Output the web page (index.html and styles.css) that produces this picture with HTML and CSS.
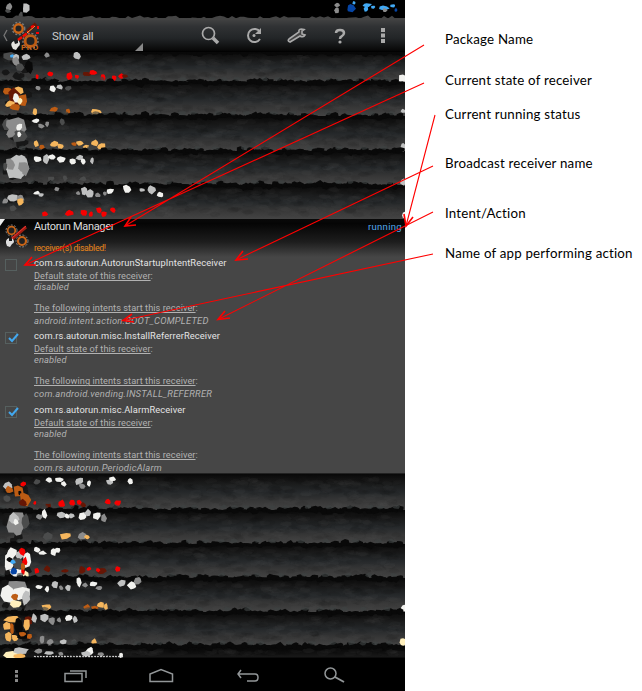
FILE: index.html
```html
<!DOCTYPE html>
<html lang="en">
<head>
<meta charset="utf-8">
<title>Autorun Manager guide</title>
<link rel="stylesheet" href="styles.css">
</head>
<body>
<main class="guide">
  <section class="phone">
    <header class="statusbar"><svg class="art" data-top="0" data-height="18"></svg></header>
    <nav class="actionbar">
      <svg class="bar-art" width="405" height="36" viewBox="0 17 405 36">
        <path class="bar-edge" d=""/>
        <path d="M7 30L4 35.500L7 41" fill="none" stroke="#777" stroke-width="1.300"/>
        <g fill="none" stroke="#777" stroke-width="1.500" stroke-dasharray="2 1.600"><circle cx="18.500" cy="28.500" r="6.200"/><circle cx="30.500" cy="41" r="7.500"/></g>
        <circle cx="18.500" cy="28.500" r="4.200" fill="#222" stroke="#c96518" stroke-width="2.400"/>
        <circle cx="30.500" cy="41" r="5.400" fill="#222" stroke="#bd5c14" stroke-width="2.800"/>
        <path d="M18 40L26 34L35 24" stroke="#f10b00" stroke-width="2.500" stroke-dasharray="5 1" fill="none"/>
        <path d="M28 31L36 24" stroke="#641708" stroke-width="4"/><path d="M27 33L35 26" stroke="#ffb04b"/>
        <path d="M38 26v3M36 33h3M31 27l3 -1" stroke="#f00" stroke-width="2"/>
        <path d="M13 49Q9 43 14 41L15 44L18 43L18 40Q22 44 18 47L16 50" fill="#e4e4df"/>
        <path d="M143 43V51H135Z" fill="#888"/>
        <g fill="none" stroke="#aaa"><circle cx="208.500" cy="33.500" r="6" stroke-width="1.700"/><path d="M213 38L218 43" stroke-width="3.500"/>
        <path d="M260 32A6.500 6.500 0 1 0 260 39" stroke-width="2"/></g>
        <path d="M261 28V34H255Z" fill="#aaa"/><circle cx="254" cy="35.500" r="1.500" fill="#aaa"/>
        <path d="M289 39L299 32Q298 28 304 29.500L302 31V34L305 35Q303 38 300 36L290 42Q287 41 289 39Z" fill="#444" stroke="#aaa" stroke-width="1.600"/>
        <path d="M336 33Q336 30 340 30T344 33Q344 35 341.500 36.500Q340 37 340 39" fill="none" stroke="#aaa" stroke-width="2.500"/><circle cx="340" cy="42" r="1.600" fill="#aaa"/>
        <path d="M381 28h4v4h-4zM381 33.500h4v4h-4zM381 39h4v4h-4z" fill="#aaa"/>
      </svg>
      <span class="filter">Show all</span><span class="pro">PRO</span>
    </nav>
    <div class="row"><svg class="art" data-top="52" data-height="30"></svg></div>
    <div class="row"><svg class="art" data-top="82" data-height="34"></svg></div>
    <div class="row"><svg class="art" data-top="116" data-height="35"></svg></div>
    <div class="row"><svg class="art" data-top="151" data-height="34"></svg></div>
    <div class="row"><svg class="art" data-top="185" data-height="34"></svg></div>
    <article class="expanded">
      <header class="app">
        <svg class="app-icon" width="30" height="32" viewBox="0 218 30 32">
          <path d="M0 219L5 219L0 226Z" fill="#eee"/>
          <g fill="none" stroke="#8b8b8b" stroke-dasharray="2 1.500"><circle cx="11.500" cy="230.500" r="5.500"/><circle cx="22" cy="241" r="6"/></g>
          <circle cx="11.500" cy="230.500" r="3.800" fill="#222" stroke="#c96518" stroke-width="1.800"/><circle cx="22" cy="241" r="4" fill="#222" stroke="#c96518" stroke-width="2.200"/>
          <path d="M12 239L26 227" stroke="#9d1e12" stroke-width="3"/><path d="M12 238L26 226" stroke="#e33"/>
          <path d="M7 246Q4 240 9 238L9 241L12 241L12 238Q16 242 12 244L10 247" fill="#ddd"/>
        </svg>
        <div class="app-name">Autorun Manager</div><div class="running">running</div>
        <div class="warning">receiver(s) disabled!</div>
      </header>
      <div class="entry">
        <span class="check"></span>
        <div class="details"><h2>com.rs.autorun.AutorunStartupIntentReceiver</h2><p class="s"><u>Default state of this receiver</u>:</p><i class="state">disabled</i><p class="t"><u>The following intents start this receiver</u>:</p><i class="intent">android.intent.action.BOOT_COMPLETED</i></div>
      </div>
      <div class="entry">
        <span class="check"><svg width="14" height="14" viewBox="0 0 14 14"><path d="M3 7L6 10L12 3" fill="none" stroke="#42a8ef" stroke-width="2"/></svg></span>
        <div class="details"><h2>com.rs.autorun.misc.InstallReferrerReceiver</h2><p class="s"><u>Default state of this receiver</u>:</p><i class="state">enabled</i><p class="t"><u>The following intents start this receiver</u>:</p><i class="intent">com.android.vending.INSTALL_REFERRER</i></div>
      </div>
      <div class="entry">
        <span class="check"><svg width="14" height="14" viewBox="0 0 14 14"><path d="M3 7L6 10L12 3" fill="none" stroke="#42a8ef" stroke-width="2"/></svg></span>
        <div class="details"><h2>com.rs.autorun.misc.AlarmReceiver</h2><p class="s"><u>Default state of this receiver</u>:</p><i class="state">enabled</i><p class="t"><u>The following intents start this receiver</u>:</p><i class="intent">com.rs.autorun.PeriodicAlarm</i></div>
      </div>
    </article>
    <div class="row"><svg class="art" data-top="474" data-height="36"></svg></div>
    <div class="row"><svg class="art" data-top="510" data-height="34"></svg></div>
    <div class="row"><svg class="art" data-top="544" data-height="34"></svg></div>
    <div class="row"><svg class="art" data-top="578" data-height="34"></svg></div>
    <div class="row"><svg class="art" data-top="612" data-height="34"></svg></div>
    <div class="row last"><svg class="art" data-top="646" data-height="12"></svg></div>
    <footer class="navbar">
      <svg width="405" height="33" viewBox="0 658 405 33" fill="none" stroke="#929698" stroke-width="1.500">
        <path d="M15 670h3v3h-3zM15 674.500h3v3h-3zM15 679h3v3h-3z" fill="#888" stroke="none"/>
        <path d="M65 673.500H82V681.500H65ZM70 671H86V678M150 681.500V674L161 669.500L172.500 674V681.500Z"/>
        <path d="M241 670L238 674L241 678M238 674H255Q258 674 258 677.500T255 681H247"/>
        <circle cx="330.500" cy="673.500" r="5.500"/><path d="M335 677L344 682" stroke-width="2"/>
      </svg>
    </footer>
  </section>
  <aside class="labels">
    <div class="label package">Package Name</div>
    <div class="label current">Current state of receiver</div>
    <div class="label status">Current running status</div>
    <div class="label broadcast">Broadcast receiver name</div>
    <div class="label action">Intent/Action</div>
    <div class="label performer">Name of app performing action</div>
  </aside>
  <svg class="arrows" width="642" height="691" fill="none" stroke="#f00" stroke-width="1.100">
    <path d="M424 45L125 226M424 83L25 265M435 115L406 226M433 166L236 260M433 212L218 319.500M433 254L123 320.500"/>
    <path stroke-width="1.600" d="M131 217L125 226L136 225M32 257L25 265L36 265M404 214L406 226L413 217M243 251L236 260L248 259M225 311L218 319.500L230 318M132 314L123 320.500L134 322"/>
  </svg>
</main>
<script src="script.js"></script>
</body>
</html>
```
FILE: styles.css
```css
* { box-sizing: border-box; }
body { margin: 0; background: #fff; }
.guide { position: relative; display: flex; width: 642px; height: 691px; overflow: hidden; }
.phone { width: 405px; height: 691px; overflow: hidden; background: #000; font-family: Roboto, sans-serif; color: #ddd; }
svg { display: block; }
.statusbar { height: 18px; background: #000; }
.actionbar { position: relative; z-index: 1; height: 34px; background: linear-gradient(#454545, #303234 25%, #222527 60%, #090909 94%, #000); }
.bar-art { position: absolute; left: 0; top: -1px; }
.filter { position: absolute; left: 52px; top: 10px; font-size: 11.5px; line-height: 16px; letter-spacing: -.2px; color: #ccc; }
.pro { position: absolute; left: 21px; top: 25px; font: bold 8px/10px Roboto, sans-serif; letter-spacing: .7px; color: #c8651a; }
.row { background: linear-gradient(#080808, #171717 20%, #25282a 50%, #373737 75%, #444); }
.row.last { background: linear-gradient(#050505, #181818 90%, #050505); }
.art { width: 405px; overflow: visible; position: relative; }
.expanded { position: relative; height: 255px; background: #464646; border-bottom: 1px solid #222; }
.app { display: grid; grid-template-columns: 34px 1fr 37px; grid-template-rows: 20px 18px; height: 38px; background: linear-gradient(#090909, #050505 12%, #1d1d1d 60%, #464646); }
.app-icon { grid-row: 1 / 3; position: relative; top: -1px; }
.app-name { font-size: 11px; line-height: 16px; letter-spacing: -.32px; }
.running { font-size: 9.5px; line-height: 15px; letter-spacing: .3px; color: #52a8eb; white-space: nowrap; }
.warning { grid-column: 2 / 4; font-size: 8.7px; line-height: 18px; letter-spacing: -.3px; color: #e9851a; }
.entry { display: flex; height: 73.3px; }
.check { width: 12px; height: 12px; margin: 2px 17px 0 5px; border: 1px solid #56605f; flex: none; }
.check svg { margin: -2px 0 0 0; }
.details { white-space: nowrap; color: #b2b2b2; font-size: 9px; }
.details h2 { margin: 0; font-size: 9.3px; line-height: 12px; font-weight: 400; letter-spacing: .11px; color: #e4e4e4; }
.details p { margin: 0; line-height: 13px; font-size: 9.2px; letter-spacing: .06px; }
.details i { display: block; font-size: 9.3px; line-height: 9px; letter-spacing: .12px; }
.details .t { margin-top: 11px; line-height: 12px; letter-spacing: .07px; }
.details .intent { line-height: 13px; font-size: 9.4px; letter-spacing: .24px; }
.navbar { position: relative; height: 33px; background: #000; }
.labels { padding: 30px 0 0 40px; font-family: Lato, "Liberation Sans", sans-serif; font-size: 13.3px; line-height: 20px; letter-spacing: .2px; font-variant-ligatures: none; color: #000; white-space: nowrap; }
.package { margin-top: -1px; }
.current { margin-top: 21px; }
.status { margin-top: 14px; }
.broadcast { margin-top: 29px; }
.action { margin-top: 30px; }
.performer { margin-top: 20px; }
.arrows { position: absolute; inset: 0; }
```
FILE: script.js
```js
let seed = 73;
const rnd = () => { seed = (seed * 16807) % 2147483647; return seed / 2147483647; };
const ns = 'http://www.w3.org/2000/svg';
const colors = { w: '#f2f2ef', g: '#8c8c8c', d: '#4b4c4c', s: '#bfc0c0', r: '#f80000', m: '#651605', o: '#bd5c14', y: '#f5b65d', c: '#fff0bd', b: '#0645a5', l: '#42aaf5', k: '#090909' };

function polygon(svg, points, fill, opacity = 1) {
  const el = document.createElementNS(ns, 'polygon');
  el.setAttribute('points', points.map(p => p.join(',')).join(' '));
  el.setAttribute('fill', fill);
  el.setAttribute('opacity', opacity);
  svg.append(el);
}
function shard(svg, x, y, w, h, fill, opacity) {
  const pts = [];
  for (let i = 0; i < 7; i++) {
    const a = i / 7 * Math.PI * 2 + rnd() * .5;
    const r = .8 + rnd() * .5;
    pts.push([x + Math.cos(a) * w / 2 * r, y + Math.sin(a) * h / 2 * r]);
  }
  polygon(svg, pts, fill, opacity);
}

// Color key, center x, center y, width, height.
const shards = {
  0: 'g 9 7 6 7;s 26 8 7 9;d 21 15 4 6;d 8 11 5 4;g 337 5 6 4;g 337 10 5 6;b 351 8 8 7;l 354 3 3 4;l 367 5 9 4;l 366 9 4 6;l 373 7 4 3;l 384 8 9 4;g 385 10 4 4;l 393 6 5 3;b 396 10 3 4',
  52: 'd 10 57 14 8;l 12 56 4 3;s 16 57 6 6;s 26 57 8 6;g 16 62 7 9;d 20 67 8 8;k 29 67 8 13;g 47 55 5 5;s 77 56 8 7;r 37 77 3 6;r 50 74 6 5;r 70 76 6 7;r 77 77 4 5;m 87 74 8 4;r 93 73 7 5;r 103 77 5 6;r 114 78 5 6;r 121 76 5 5;m 125 76 6 4;w 402 79 7 9',
  82: 'o 8 91 9 8;y 19 91 11 8;m 14 97 12 18;o 22 100 10 12;y 10 104 9 6;w 16 98 7 10;o 15 107 11 7;c 20 101 5 6;w 53 89 7 6;s 60 87 6 5;g 38 88 5 4;d 68 88 6 5;y 35 112 4 7;o 54 110 8 5;o 68 111 4 5;y 96 112 9 6;s 403 111 5 4',
  116: 'd 7 125 9 11;g 18 126 23 20;d 20 136 17 12;g 10 134 9 9;w 19 127 6 8;w 19 134 4 6;w 36 121 7 4;g 41 126 6 5;g 47 124 4 6;d 62 122 5 7;y 36 144 5 7;o 42 147 5 4;y 54 144 8 5;y 60 146 6 5;o 74 144 5 4;y 80 143 7 5;y 86 147 6 4;y 95 143 8 6;y 101 146 8 6;s 403 147 5 9',
  151: 's 17 167 23 21;g 10 164 8 12;s 20 160 13 9;g 24 168 10 14;s 17 175 12 8;d 5 166 4 8;w 37 159 8 5;s 46 159 6 9;w 52 157 8 5;w 61 159 8 6;w 73 161 7 6;s 80 158 7 5;w 83 161 5 6;s 92 161 4 6;d 51 179 7 5;d 65 178 5 6;d 83 179 7 5;s 403 182 6 7',
  185: 's 13 198 11 8;g 20 198 8 8;y 20 202 6 8;d 13 208 7 6;g 5 201 6 5;w 37 193 7 4;s 41 195 5 4;g 57 189 5 4;g 78 193 4 4;s 84 191 6 7;s 90 193 8 9;g 98 195 5 4;g 105 194 4 4;w 110 191 8 5;w 127 189 8 8;s 142 190 5 4;s 151 190 8 8;w 160 195 6 5;r 45 214 6 5;r 69 213 8 6;r 84 213 7 6;r 91 214 5 5;r 99 210 5 6;r 104 214 5 6;r 113 210 5 6;w 404 215 4 6',
  474: 's 8 486 9 7;o 9 490 9 7;r 23 484 6 4;o 19 491 11 11;k 20 493 3 5;o 25 499 11 12;m 23 503 8 7;d 7 499 8 6;w 49 480 7 6;w 59 480 8 5;w 64 484 5 5;s 79 481 9 7;g 82 486 7 5;w 89 484 4 6;s 110 482 7 6;w 113 479 7 4;w 130 481 5 6;d 37 482 6 5;r 35 503 3 4;m 48 506 6 5;r 62 504 7 7;r 72 503 5 6;r 79 502 5 5;m 83 505 6 5;r 108 502 6 5;r 118 503 6 6',
  510: 'g 15 523 18 22;s 14 519 9 11;w 16 522 5 7;d 25 522 8 16;g 18 532 9 8;w 44 514 6 9;g 39 517 7 5;s 62 515 9 6;s 71 516 7 5;w 67 516 5 5;w 83 516 8 8;s 88 513 7 7;w 97 516 7 8;g 104 518 5 8;d 47 537 10 8;y 65 536 11 6;g 82 536 9 8;y 87 537 5 5',
  544: 'w 12 553 12 10;w 9 563 10 18;w 17 573 17 9;w 27 560 8 14;s 19 555 9 8;c 26 575 7 7;k 10 560 6 5;d 18 563 10 11;b 14 571 7 7;l 13 562 5 4;r 22 552 6 7;r 25 561 5 8;o 23 567 5 8;r 23 572 4 5;w 37 550 7 5;w 42 553 8 4;w 53 552 6 8;w 57 550 7 5;r 37 571 5 6;m 47 569 6 6;m 65 571 7 3;m 82 570 6 7;r 89 569 5 4;m 101 571 9 6;r 98 570 4 4;r 118 569 5 5',
  578: 'g 17 587 21 13;w 9 594 14 17;w 22 593 17 14;c 15 604 12 9;s 26 597 8 15;o 15 597 7 5;w 39 587 6 4;w 47 589 4 6;s 55 585 6 7;g 61 588 4 5;s 68 588 6 6;w 79 582 5 9;g 85 585 5 4;w 93 584 8 5;g 99 588 6 4;s 122 583 8 7;w 132 585 8 9;g 138 581 8 7;y 46 607 9 6;o 87 607 7 5;y 101 605 7 6;o 95 608 7 4;y 106 607 4 7;w 404 608 5 7',
  612: 'm 28 621 7 10;y 12 619 14 7;y 7 626 9 7;y 27 625 6 12;o 12 629 4 13;k 19 626 9 16;y 8 637 7 9;y 15 638 7 7;k 23 636 10 9;o 23 634 7 5;o 29 636 5 5;s 34 618 5 9;s 44 618 8 8;g 52 621 7 7;g 59 620 5 5;w 69 618 7 6;s 75 619 5 7;g 42 640 5 8;g 50 642 6 6;s 63 642 7 5;y 94 642 5 6;d 74 642 6 5;c 403 642 6 8',
  646: 'c 11 655 13 8;s 21 651 14 6;y 20 656 13 5;g 39 651 8 5;s 49 653 8 4;g 61 654 5 4;w 90 651 8 8;s 86 654 9 5;g 101 654 8 4;w 121 655 4 5'
};

document.querySelectorAll('.art').forEach(svg => {
  const top = +svg.dataset.top, h = +svg.dataset.height;
  svg.setAttribute('viewBox', `0 ${top} 405 ${h}`);
  svg.style.height = h + 'px';
  if (top) {
    for (let i = 0; i < h * 9; i++) {
      shard(svg, rnd() * 402, top + 4 + rnd() * (h - 8), 12, 5, rnd() > .5 ? '#666b6c' : '#080808', .06);
    }
    if (top !== 474) {
      for (let x = 0; x < 403; x += 5) shard(svg, x, top + (rnd() - .4) * 3, 8, 3 + rnd() * 4, '#090909');
      for (let x = 2; x < 400; x += 10 + rnd() * 20) shard(svg, x, top - 3, 7, 4, '#3d4242', .65);
    }
    for (let i = 0; i < 7; i++) shard(svg, 4 + rnd() * 24, top + 5 + rnd() * (h - 8), 8, 7, '#171717');
  }
  shards[top].split(';').forEach(item => {
    const [c, x, y, w, height] = item.split(' ');
    shard(svg, +x, +y, +w, +height, colors[c]);
  });
  if (top === 646) {
    for (let x = 35; x < 123; x += 3) shard(svg, x, 656.5, 2, 1.5, '#ddd');
  }
});
let edge = 'M0 18';
for (let x = 0; x <= 405; x += 4) edge += `L${x} ${15.5 + rnd() * 4}`;
const bar = document.querySelector('.bar-edge');
bar.setAttribute('d', edge + 'L405 20L0 20Z');
bar.setAttribute('fill', '#444');
document.querySelector('.bar-art').style.overflow = 'visible';
```
